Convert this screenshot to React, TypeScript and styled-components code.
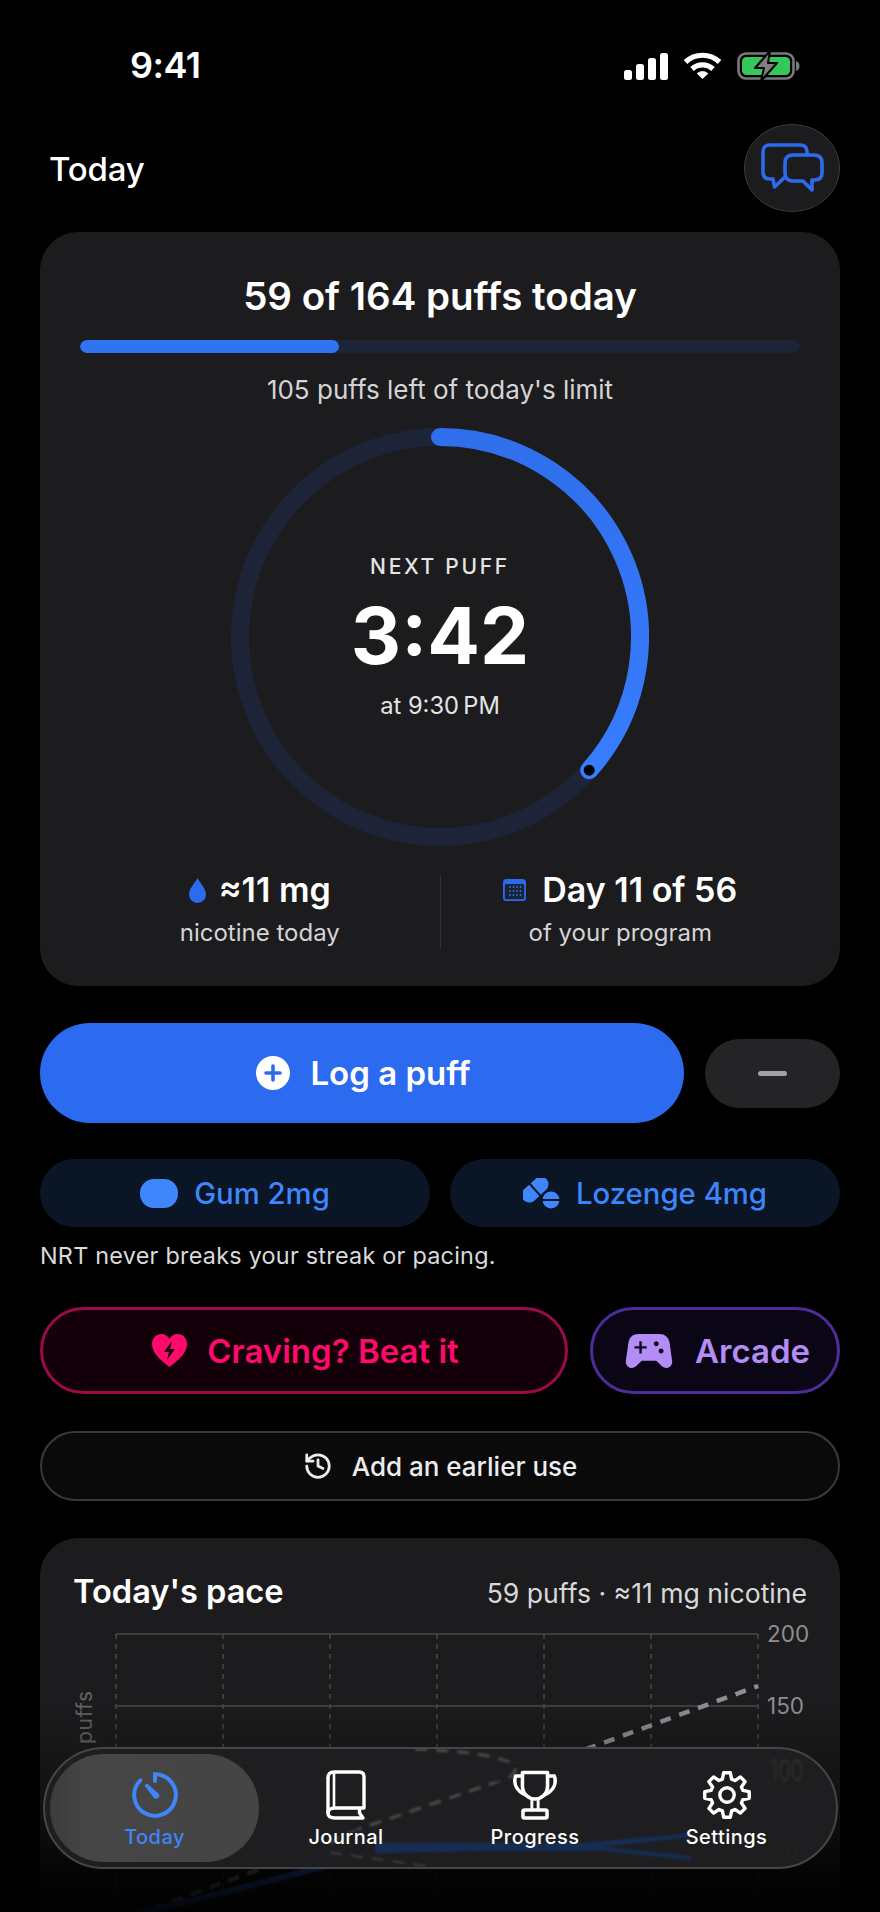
import React from 'react';
import styled, { createGlobalStyle } from 'styled-components';
import { History } from 'lucide-react';
import { MdSportsEsports } from 'react-icons/md';

const Global = createGlobalStyle`
  html, body { margin: 0; padding: 0; background: #000; }
  body { font-family: Inter, "Liberation Sans", sans-serif; color: #fff; }
`;

const Screen = styled.div`
  position: relative;
  width: 880px;
  height: 1912px;
  overflow: hidden;
  background: #000;
  padding: 0 40px;
  box-sizing: border-box;
`;

const StatusBar = styled.div`
  height: 124px;
  display: flex;
  align-items: flex-start;
  justify-content: space-between;
  padding: 46px 40px 0 90px;
  box-sizing: border-box;
`;
const Clock = styled.div`
  font-size: 36px;
  line-height: 38px;
  font-weight: 600;
  letter-spacing: -0.5px;
`;
const StatusIcons = styled.div`
  display: flex;
  align-items: center;
  gap: 15px;
  padding-top: 4px;
`;

const Header = styled.div`
  height: 88px;
  margin-bottom: 20px;
  display: flex;
  align-items: center;
  justify-content: space-between;
  padding-left: 9px;
`;
const HeaderTitle = styled.div`
  font-size: 33px;
  font-weight: 500;
  letter-spacing: -0.2px;
  padding-top: 2px;
`;
const ChatButton = styled.div`
  width: 96px;
  height: 88px;
  box-sizing: border-box;
  border-radius: 50%;
  background: #1c1c1e;
  border: 1.5px solid #3a3a3c;
  display: flex;
  align-items: center;
  justify-content: center;
`;

const Card = styled.div`
  background: #1c1c1e;
  border-radius: 38px;
`;
const HeroCard = styled(Card)`
  padding: 44px 40px 46px;
  display: flex;
  flex-direction: column;
  align-items: center;
`;
const HeroTitle = styled.div`
  font-size: 38.5px;
  line-height: 40px;
  font-weight: 600;
`;
const Track = styled.div`
  width: 100%;
  height: 13px;
  margin-top: 24px;
  border-radius: 7px;
  background: #1e2438;
  overflow: hidden;
`;
const TrackFill = styled.div`
  height: 100%;
  border-radius: 7px;
  background: #3174f1;
`;
const HeroSub = styled.div`
  margin-top: 21px;
  margin-bottom: -1px;
  font-size: 26px;
  line-height: 32px;
  color: #d4d4d6;
`;
const Ring = styled.div`
  position: relative;
  width: 418px;
  height: 418px;
  margin-top: 23px;
`;
const RingCentre = styled.div`
  position: absolute;
  inset: 0;
  display: flex;
  flex-direction: column;
  align-items: center;
  padding-top: 125px;
  box-sizing: border-box;
`;
const RingLabel = styled.div`
  font-size: 21px;
  line-height: 28px;
  font-weight: 500;
  letter-spacing: 2.7px;
  color: #e4e4e6;
`;
const RingTime = styled.div`
  margin-top: 11px;
  font-size: 78px;
  line-height: 88px;
  font-weight: 700;
`;
const RingAt = styled.div`
  margin-top: 10px;
  font-size: 23.7px;
  line-height: 32px;
  color: #e4e4e6;
`;
const Stats = styled.div`
  width: 100%;
  margin-top: 30px;
  height: 64px;
  display: grid;
  grid-template-columns: 1fr 1px 1fr;
`;
const Divider = styled.div`
  background: #333336;
`;
const Stat = styled.div`
  display: flex;
  flex-direction: column;
  align-items: center;
`;
const StatMain = styled.div<{ $gap: number }>`
  display: flex;
  align-items: center;
  gap: ${p => p.$gap}px;
  font-size: 34px;
  line-height: 28px;
  font-weight: 600;
`;
const StatSub = styled.div`
  margin-top: 14px;
  font-size: 24px;
  line-height: 30px;
  color: #d4d4d6;
`;

const ActionRow = styled.div`
  margin-top: 37px;
  display: flex;
  align-items: center;
  gap: 21px;
`;
const LogButton = styled.div`
  flex: 1;
  height: 100px;
  border-radius: 50px;
  background: #2c6bef;
  display: flex;
  align-items: center;
  justify-content: center;
  gap: 20px;
  padding-left: 3px;
  box-sizing: border-box;
  font-size: 33px;
  font-weight: 600;
`;
const MinusButton = styled.div`
  width: 135px;
  height: 69px;
  border-radius: 35px;
  background: #242426;
  display: flex;
  align-items: center;
  justify-content: center;
`;
const MinusBar = styled.div`
  width: 29px;
  height: 5px;
  border-radius: 3px;
  background: #a2a2a6;
`;

const NrtRow = styled.div`
  margin-top: 36px;
  display: grid;
  grid-template-columns: 1fr 1fr;
  gap: 20px;
`;
const NrtButton = styled.div`
  height: 68px;
  border-radius: 34px;
  background: #0a1525;
  color: #3d86fb;
  display: flex;
  align-items: center;
  justify-content: center;
  gap: 16px;
  font-size: 29.3px;
  font-weight: 500;
`;
const GumDot = styled.div`
  width: 38px;
  height: 29px;
  border-radius: 14px;
  background: #3d86fb;
`;
const Note = styled.div`
  margin-top: 14px;
  font-size: 23.4px;
  line-height: 30px;
  letter-spacing: 0.24px;
  color: #dadadc;
`;

const CravingRow = styled.div`
  margin-top: 36px;
  display: flex;
  gap: 22px;
`;
const OutlineButton = styled.div<{ $fg: string; $line: string; $bg: string; $grow?: boolean }>`
  height: 87px;
  box-sizing: border-box;
  border-radius: 44px;
  border: 3px solid ${p => p.$line};
  background: ${p => p.$bg};
  color: ${p => p.$fg};
  display: flex;
  align-items: center;
  justify-content: center;
  gap: ${p => (p.$grow ? 20 : 17)}px;
  padding-left: ${p => (p.$grow ? 3 : 0)}px;
  font-size: 33px;
  font-weight: 600;
  ${p => (p.$grow ? 'flex: 1;' : 'width: 250px;')}
`;
const AddButton = styled.div`
  margin-top: 37px;
  height: 70px;
  box-sizing: border-box;
  border-radius: 35px;
  border: 2px solid #3a3a3c;
  background: #0a0a0a;
  color: #ececee;
  display: flex;
  align-items: center;
  justify-content: center;
  gap: 19px;
  font-size: 26px;
  font-weight: 500;
`;

const PaceCard = styled(Card)`
  margin-top: 37px;
  height: 500px;
  padding-top: 36px;
  box-sizing: border-box;
`;
const PaceHeader = styled.div`
  height: 36px;
  padding: 0 33px;
  display: flex;
  align-items: center;
  justify-content: space-between;
`;
const PaceTitle = styled.div`
  font-size: 32.6px;
  font-weight: 600;
  margin-top: -2px;
`;
const PaceMeta = styled.div`
  font-size: 26.6px;
  margin-top: 1px;
  color: #d8d8da;
`;
const ChartSvg = styled.svg`
  display: block;
  margin-top: 10px;
`;
const AxisText = styled.text`
  font-family: Inter, "Liberation Sans", sans-serif;
  font-size: 22.5px;
  fill: #8e8e93;
`;
const AxisTitle = styled.text`
  font-family: Inter, "Liberation Sans", sans-serif;
  font-size: 21px;
  letter-spacing: 0.6px;
  fill: #636366;
`;

const Fade = styled.div`
  position: absolute;
  left: 0;
  right: 0;
  bottom: 0;
  height: 212px;
  pointer-events: none;
  background: linear-gradient(to bottom, rgba(0,0,0,0) 0%, rgba(0,0,0,.5) 60%, rgba(0,0,0,.85) 82%, rgba(0,0,0,.95) 100%);
`;
const TabBar = styled.div`
  position: absolute;
  left: 43px;
  top: 1747px;
  width: 795px;
  height: 122px;
  box-sizing: border-box;
  border-radius: 61px;
  border: 2px solid #464648;
  background: #1e1e20;
  overflow: hidden;
`;
const Refraction = styled.svg`
  position: absolute;
  left: -2px;
  top: -2px;
  filter: blur(0.8px);
`;
const GhostText = styled.text`
  font-family: Inter, "Liberation Sans", sans-serif;
  font-size: 20px;
  fill: #2e2e30;
`;
const TabGrid = styled.div`
  position: relative;
  height: 100%;
  display: grid;
  grid-template-columns: 201px 190px 188px 195px;
  padding: 5px;
  box-sizing: border-box;
`;
const Tab = styled.div<{ $on?: boolean }>`
  display: flex;
  flex-direction: column;
  align-items: center;
  padding-top: 16px;
  box-sizing: border-box;
  border-radius: 54px;
  color: ${p => (p.$on ? '#3f86f8' : '#fff')};
  background: ${p => (p.$on ? 'linear-gradient(90deg,#3c3c3d,#464646 18%,#444 100%)' : 'transparent')};
  ${p => (p.$on ? 'width: 209px; height: 108px;' : '')}
`;
const TabIcon = styled.div`
  height: 50px;
  display: flex;
  align-items: center;
  justify-content: center;
`;
const TabLabel = styled.div`
  margin-top: 4px;
  font-size: 20px;
  line-height: 26px;
  font-weight: 500;
  letter-spacing: 0.45px;
`;

function gearPath(cx: number, cy: number, outer: number, inner: number, teeth: number) {
  const pts: string[] = [];
  const step = (Math.PI * 2) / teeth;
  for (let i = 0; i < teeth; i++) {
    const a = -Math.PI / 2 + i * step;
    const list: [number, number][] = [
      [inner, a - step * 0.36],
      [outer, a - step * 0.19],
      [outer, a + step * 0.19],
      [inner, a + step * 0.36],
    ];
    for (const [r, t] of list) {
      pts.push(`${(cx + r * Math.cos(t)).toFixed(2)} ${(cy + r * Math.sin(t)).toFixed(2)}`);
    }
  }
  return 'M' + pts.join('L') + 'Z';
}

const Cx = 209;
const R = 200;
const pct = 0.366;
const endA = pct * Math.PI * 2;
const endX = Cx + R * Math.sin(endA);
const endY = Cx - R * Math.cos(endA);

const Signal = () => (
  <svg width="44" height="27" viewBox="0 0 44 27">
    <rect x="0" y="17" width="8" height="10" rx="2.5" fill="#fff" />
    <rect x="12" y="11" width="8" height="16" rx="2.5" fill="#fff" />
    <rect x="24" y="5" width="8" height="22" rx="2.5" fill="#fff" />
    <rect x="36" y="0" width="8" height="27" rx="2.5" fill="#fff" />
  </svg>
);
const Wifi = () => (
  <svg width="39" height="28" viewBox="0 0 39 28" fill="none" stroke="#fff" strokeWidth="5.2">
    <path d="M2.5 10 C12 1 27 1 36.5 10" />
    <path d="M9 17 C15 11.5 24 11.5 30 17" />
    <path d="M14.2 21.5 L19.5 26.5 L24.8 21.5 C21.5 19 17.5 19 14.2 21.5 Z" fill="#fff" strokeWidth="1" />
  </svg>
);
const Battery = () => (
  <svg width="63" height="32" viewBox="0 0 63 32">
    <rect x="1.5" y="3.5" width="55" height="25" rx="7.5" fill="none" stroke="#7a7a7c" strokeWidth="2.6" />
    <rect x="5" y="7" width="48" height="18" rx="4.5" fill="#34c759" />
    <path d="M59 11 Q62.5 12 62.5 16 Q62.5 20 59 21 Z" fill="#7a7a7c" />
    <path d="M33 1 L18 18 H27 L24 31 L40 13 H31 Z" fill="#7f7f81" stroke="#000" strokeWidth="2" strokeLinejoin="round" />
  </svg>
);
const ChatIcon = () => (
  <svg width="64" height="50" viewBox="0 0 64 50" fill="none" stroke="#2c6bef" strokeWidth="3.6" strokeLinejoin="round" strokeLinecap="round">
    <path d="M47 12 V9 Q47 2 40 2 H10 Q3 2 3 9 V29 Q3 36 10 36 H13 L14.5 44 L25 34" />
    <path d="M33 12 H54 Q62 12 62 20 V30 Q62 37 54 37 H52 L52 47 L43 38 H33 Q25 38 25 30 V20 Q25 12 33 12 Z" />
  </svg>
);
const Drop = () => (
  <svg width="17" height="25" viewBox="0 0 17 25">
    <path d="M8.5 0 C11 5 17 10.5 17 16.5 A8.5 8.5 0 0 1 0 16.5 C0 10.5 6 5 8.5 0 Z" fill="#2c6bef" />
  </svg>
);
const CalendarIcon = () => (
  <svg width="23" height="22" viewBox="0 0 23 22">
    <rect x="0" y="0" width="23" height="22" rx="3.5" fill="#2c6bef" />
    <rect x="1.8" y="5" width="19.4" height="15.2" rx="1.5" fill="#1a2338" />
    {[7, 10.5, 14, 17.5].flatMap(x =>
      [8, 12, 16].map(y => <rect key={`${x}-${y}`} x={x - 0.7} y={y - 0.8} width="1.4" height="1.6" fill="#3a82f7" />),
    )}
  </svg>
);
const PlusCircle = () => (
  <svg width="34" height="34" viewBox="0 0 34 34">
    <circle cx="17" cy="17" r="17" fill="#fff" />
    <path d="M17 10 V24 M10 17 H24" stroke="#2c6bef" strokeWidth="3.6" strokeLinecap="round" />
  </svg>
);
const LozengeIcon = () => (
  <svg width="37" height="31" viewBox="0 0 37 31">
    <g transform="translate(12 11.7) rotate(-42)">
      <rect x="-15.5" y="-7.6" width="31" height="15.2" rx="7.6" fill="#3d86fb" />
      <line x1="0" x2="0" y1="-8" y2="8" stroke="#0a1525" strokeWidth="2" />
    </g>
    <circle cx="28" cy="22" r="8.5" fill="#3d86fb" />
    <line x1="19" x2="37" y1="22" y2="22" stroke="#0a1525" strokeWidth="2" />
  </svg>
);
const HeartBolt = () => (
  <svg width="35" height="33" viewBox="0 0 35 33">
    <path d="M17.5 33 C10 27 0 20 0 10 C0 4 4.5 0 9.5 0 C13 0 16 2 17.5 5 C19 2 22 0 25.5 0 C30.5 0 35 4 35 10 C35 20 25 27 17.5 33 Z" fill="#ff0a6c" />
    <path d="M20 7 L12 18 H17 L15 26 L23 15 H18 Z" fill="#130008" />
  </svg>
);
const TimerIcon = () => (
  <svg width="46" height="46" viewBox="0 0 46 46" fill="none">
    <path d="M23 9 V2.2 A20.8 20.8 0 1 1 8.3 8.3" stroke="currentColor" strokeWidth="4" strokeLinecap="round" />
    <path d="M12.5 13.5 L15 11.5 L26.5 21.5 A3.2 3.2 0 0 1 22 26 Z" fill="currentColor" />
  </svg>
);
const BookIcon = () => (
  <svg width="40" height="50" viewBox="0 0 40 50" fill="none" stroke="#fff" strokeWidth="3.4" strokeLinejoin="round" strokeLinecap="round">
    <path d="M2 8 Q2 2 8 2 H33 Q38 2 38 7 V38 H9 Q2 38 2 43 Q2 48 9 48 H37 L33.5 43 V38" />
    <path d="M2 8 V43" />
    <path d="M8 2 V38" strokeWidth="2.6" />
  </svg>
);
const TrophyIcon = () => (
  <svg width="46" height="50" viewBox="0 0 44 50" preserveAspectRatio="none" fill="none" stroke="#fff" strokeWidth="3.4" strokeLinejoin="round" strokeLinecap="round">
    <path d="M10 2.5 H34 V16 C34 24 28 29 22 29 C16 29 10 24 10 16 Z" />
    <path d="M10 6 H3.5 C1 14 4.5 21 13 25" />
    <path d="M34 6 H40.5 C43 14 39.5 21 31 25" />
    <path d="M19 29 V40 M25 29 V40" strokeWidth="2.8" />
    <rect x="10.5" y="40" width="23" height="8" rx="1.5" />
  </svg>
);
const GearIcon = () => (
  <svg width="50" height="50" viewBox="0 0 50 50" fill="none" stroke="#fff" strokeWidth="3.4" strokeLinejoin="round">
    <path d={gearPath(25, 25, 22.5, 16.5, 8)} />
    <circle cx="25" cy="25" r="7.2" />
  </svg>
);

const gridXs = [76, 183, 290, 397, 504, 611, 718];

export default function App() {
  return (
    <>
      <Global />
      <Screen>
        <StatusBar>
          <Clock>9:41</Clock>
          <StatusIcons>
            <Signal />
            <Wifi />
            <Battery />
          </StatusIcons>
        </StatusBar>

        <Header>
          <HeaderTitle>Today</HeaderTitle>
          <ChatButton>
            <ChatIcon />
          </ChatButton>
        </Header>

        <HeroCard>
          <HeroTitle>59 of 164 puffs today</HeroTitle>
          <Track>
            <TrackFill style={{ width: `${(59 / 164) * 100}%` }} />
          </Track>
          <HeroSub>105 puffs left of today's limit</HeroSub>
          <Ring>
            <svg width="418" height="418" viewBox="0 0 418 418" fill="none">
              <defs>
                <linearGradient id="ringGrad" x1="0" y1="0" x2="0" y2="1">
                  <stop offset="0" stopColor="#2f6fec" />
                  <stop offset="1" stopColor="#377dff" />
                </linearGradient>
              </defs>
              <circle cx={Cx} cy={Cx} r={R} stroke="#1e2438" strokeWidth="18" />
              <path
                d={`M${Cx} ${Cx - R} A${R} ${R} 0 0 1 ${endX} ${endY}`}
                stroke="url(#ringGrad)"
                strokeWidth="18"
                strokeLinecap="round"
              />
              <circle cx={endX} cy={endY} r="5.5" fill="#000" />
            </svg>
            <RingCentre>
              <RingLabel>NEXT PUFF</RingLabel>
              <RingTime>3:42</RingTime>
              <RingAt>at 9:30{'\u2009'}PM</RingAt>
            </RingCentre>
          </Ring>
          <Stats>
            <Stat>
              <StatMain $gap={13}>
                <Drop />
                ≈11 mg
              </StatMain>
              <StatSub>nicotine today</StatSub>
            </Stat>
            <Divider />
            <Stat>
              <StatMain $gap={16}>
                <CalendarIcon />
                Day 11 of 56
              </StatMain>
              <StatSub>of your program</StatSub>
            </Stat>
          </Stats>
        </HeroCard>

        <ActionRow>
          <LogButton>
            <PlusCircle />
            Log a puff
          </LogButton>
          <MinusButton>
            <MinusBar />
          </MinusButton>
        </ActionRow>

        <NrtRow>
          <NrtButton>
            <GumDot />
            Gum 2mg
          </NrtButton>
          <NrtButton>
            <LozengeIcon />
            Lozenge 4mg
          </NrtButton>
        </NrtRow>
        <Note>NRT never breaks your streak or pacing.</Note>

        <CravingRow>
          <OutlineButton $grow $fg="#ff0a6c" $line="#9c0a48" $bg="#130008">
            <HeartBolt />
            Craving? Beat it
          </OutlineButton>
          <OutlineButton $fg="#b48cf5" $line="#4f2d99" $bg="#0b0615">
            <MdSportsEsports size={58} />
            Arcade
          </OutlineButton>
        </CravingRow>

        <AddButton>
          <History size={30} strokeWidth={2.2} />
          Add an earlier use
        </AddButton>

        <PaceCard>
          <PaceHeader>
            <PaceTitle>Today's pace</PaceTitle>
            <PaceMeta>59 puffs · ≈11 mg nicotine</PaceMeta>
          </PaceHeader>
          <ChartSvg width="800" height="320" viewBox="0 0 800 320" fill="none">
            {gridXs.map(x => (
              <line key={x} x1={x} x2={x} y1="14" y2="320" stroke="#48484a" strokeWidth="1.5" strokeDasharray="5 5" />
            ))}
            {[14, 86, 158, 230].map(y => (
              <line key={y} x1="76" x2="718" y1={y} y2={y} stroke="#48484a" strokeWidth="1.5" />
            ))}
            <AxisText x="727" y="22">200</AxisText>
            <AxisText x="727" y="94">150</AxisText>
            <AxisTitle transform="translate(52 124) rotate(-90)">puffs</AxisTitle>
            <path d="M76 302 L718 66" stroke="#8e8e93" strokeWidth="4.5" strokeDasharray="11 9" />
            <path d="M76 300 L400 217" stroke="#2c6bef" strokeWidth="6" />
          </ChartSvg>
        </PaceCard>

        <Fade />

        <TabBar>
          <Refraction width="795" height="122" viewBox="0 0 795 122" fill="none">
            <path d="M332 106 L440 104 L560 104 L648 113 L648 109 L560 100 L648 90 L648 86 L540 96 L332 96 Z" fill="#14305f" opacity="0.85" />
            <path d="M372 2 C420 4 455 8 472 18 C474 26 468 30 462 32 L316 82" stroke="#4c4c4e" strokeWidth="3" strokeDasharray="12 9" />
            <path d="M316 82 C284 92 280 104 290 106 L390 120" stroke="#3e3e40" strokeWidth="2" strokeDasharray="12 9" />
            <line x1="0" x2="795" y1="16" y2="16" stroke="#252527" strokeWidth="1.5" />
            <line x1="0" x2="795" y1="34" y2="34" stroke="#222224" strokeWidth="1.5" />
            <line x1="715" x2="715" y1="0" y2="122" stroke="#222224" strokeWidth="1.5" />
            <line x1="501" x2="501" y1="0" y2="122" stroke="#212123" strokeWidth="1.5" />
            <GhostText transform="translate(727 34) scale(1 1.5)">100</GhostText>
            <GhostText transform="translate(730 112)" opacity="0.35">50</GhostText>
          </Refraction>
          <TabGrid>
            <Tab $on>
              <TabIcon><TimerIcon /></TabIcon>
              <TabLabel>Today</TabLabel>
            </Tab>
            <Tab>
              <TabIcon><BookIcon /></TabIcon>
              <TabLabel>Journal</TabLabel>
            </Tab>
            <Tab>
              <TabIcon><TrophyIcon /></TabIcon>
              <TabLabel>Progress</TabLabel>
            </Tab>
            <Tab>
              <TabIcon><GearIcon /></TabIcon>
              <TabLabel>Settings</TabLabel>
            </Tab>
          </TabGrid>
        </TabBar>
      </Screen>
    </>
  );
}
